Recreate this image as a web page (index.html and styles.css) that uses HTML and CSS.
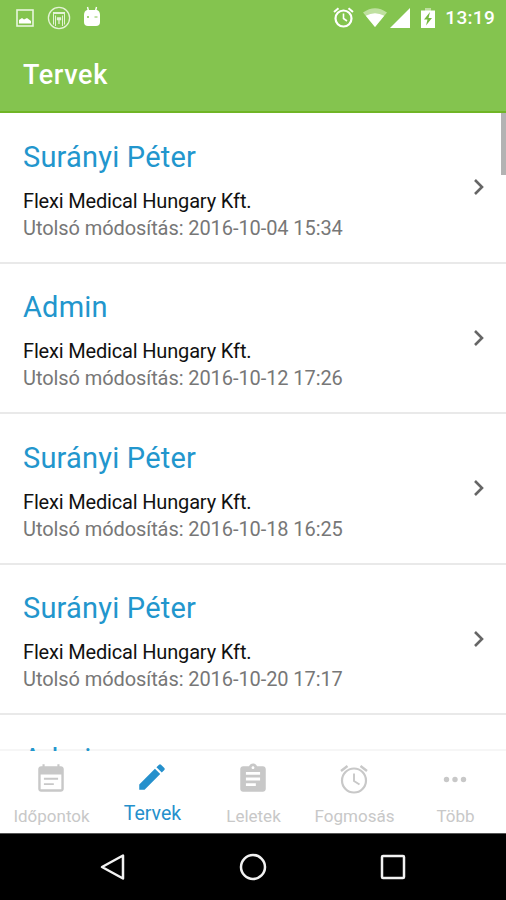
FILE: index.html
```html
<!DOCTYPE html>
<html lang="hu">
<head>
<meta charset="utf-8">
<title>Tervek</title>
<link rel="stylesheet" href="styles.css">
</head>
<body>
<div class="phone">
  <header class="header">
    <div class="status">
      <svg class="s-image" width="18" height="18" viewBox="0 0 18 18"><rect x="1" y="1" width="16" height="16" fill="none" stroke="#e8f5dc" stroke-width="1.6"/><path d="M3 14.500V11l3-2 2 1.500L11 9l4 3v2.500z" fill="#fff"/></svg>
      <svg class="s-badge" width="24" height="24" viewBox="0 0 24 24" fill="none" stroke="#e4f3d6"><circle cx="12" cy="12" r="10.600" stroke-width="1.300"/><path d="M6.500 18.500v-11h11v11M8.500 20V9.500M15.500 9.500V20" stroke-width="1"/><path d="M6 7h12" stroke-width="2"/><path d="M12 18v-4M10.500 12h3v1.500h-3z" stroke-width="1.300"/></svg>
      <svg class="s-android" width="18" height="21" viewBox="0 0 18 21"><path d="M4.500 1l1 4M13.500 1l-1 4" stroke="#fff" stroke-width="1.400"/><path d="M4 4h10q3 1 3 5v7q0 4-4 4H5q-4 0-4-4V9q0-4 3-5z" fill="#fff"/><circle cx="5" cy="11" r="1" fill="#84c44f"/><path d="M11.500 11h3" stroke="#84c44f" stroke-width="1"/></svg>
      <span class="spacer"></span>
      <svg class="s-alarm" width="21" height="21" viewBox="0 0 21 21" fill="none" stroke="#fff"><circle cx="10.500" cy="11.500" r="8" stroke-width="2.200"/><path d="M1 5l4.500-3.800M20 5l-4.500-3.800" stroke-width="2"/><path d="M10.500 6.500v5l3.500 2.500" stroke-width="1.600"/></svg>
      <svg class="s-wifi" width="24" height="20" viewBox="0 0 24 20"><path d="M0 4.500Q12-4 24 4.500L12 19z" fill="#bfe0a0"/><path d="M2.800 7.800Q12 2.500 21.200 7.800L12 19z" fill="#fff"/></svg>
      <svg class="s-signal" width="20" height="20" viewBox="0 0 20 20"><path d="M20 0v20H0z" fill="#fff"/></svg>
      <svg class="s-battery" width="14" height="20" viewBox="0 0 14 20"><path d="M4 0h6v3H4z" fill="#bfe0a0"/><path d="M0 2.500h14V20H0z" fill="#fff"/><path d="M9 4L3 11.500h3.500L5 17.500l6-7.500H7.500z" fill="#76b93e"/></svg>
      <span class="time">13:19</span>
    </div>
    <h1 class="title">Tervek</h1>
  </header>
  <main class="list">
    <div class="thumb"></div>
    <article class="row"><div class="info"><h2 class="name">Surányi Péter</h2><p class="org">Flexi Medical Hungary Kft.</p><p class="date">Utolsó módosítás: 2016-10-04 15:34</p></div><svg class="chevron" width="12" height="18" viewBox="0 0 12 18"><path d="M2 2l7 7-7 7"/></svg></article>
    <article class="row"><div class="info"><h2 class="name">Admin</h2><p class="org">Flexi Medical Hungary Kft.</p><p class="date">Utolsó módosítás: 2016-10-12 17:26</p></div><svg class="chevron" width="12" height="18" viewBox="0 0 12 18"><path d="M2 2l7 7-7 7"/></svg></article>
    <article class="row"><div class="info"><h2 class="name">Surányi Péter</h2><p class="org">Flexi Medical Hungary Kft.</p><p class="date">Utolsó módosítás: 2016-10-18 16:25</p></div><svg class="chevron" width="12" height="18" viewBox="0 0 12 18"><path d="M2 2l7 7-7 7"/></svg></article>
    <article class="row"><div class="info"><h2 class="name">Surányi Péter</h2><p class="org">Flexi Medical Hungary Kft.</p><p class="date">Utolsó módosítás: 2016-10-20 17:17</p></div><svg class="chevron" width="12" height="18" viewBox="0 0 12 18"><path d="M2 2l7 7-7 7"/></svg></article>
    <article class="row"><div class="info"><h2 class="name">Admin</h2></div></article>
  </main>
  <nav class="tabs">
    <div class="tab"><svg width="34" height="34" viewBox="0 0 24 24"><path fill="currentColor" d="M17 11.200H7v1.300h10zm2-8.200h-1V1.500h-1.500V3h-9V1.500H6V3H5c-1.100 0-2 .9-2 2v14c0 1.100.9 2 2 2h14c1.100 0 2-.9 2-2V5c0-1.100-.9-2-2-2zm.3 16.300H4.700V8.800h14.600zM14 15H7v1.300h7z"/></svg><span>Időpontok</span></div>
    <div class="tab active"><svg width="34" height="34" viewBox="0 0 24 24"><path fill="currentColor" d="M3 17.250V21h3.750L17.810 9.940l-3.750-3.750zM20.710 7.040a1 1 0 0 0 0-1.410l-2.340-2.340a1 1 0 0 0-1.410 0l-1.830 1.830 3.750 3.750z"/></svg><span>Tervek</span></div>
    <div class="tab"><svg width="34" height="34" viewBox="0 0 24 24"><path fill="currentColor" d="M19 3h-4.180C14.400 1.840 13.300 1 12 1s-2.400.84-2.820 2H5c-1.100 0-2 .9-2 2v14c0 1.100.9 2 2 2h14c1.100 0 2-.9 2-2V5c0-1.100-.9-2-2-2zm-7 0c.55 0 1 .45 1 1s-.45 1-1 1-1-.45-1-1 .45-1 1-1zm2 14H7v-2h7zm3-4H7v-2h10zm0-4H7V7h10z"/></svg><span>Leletek</span></div>
    <div class="tab"><svg width="34" height="34" viewBox="0 0 34 34" fill="none" stroke="currentColor"><circle cx="17" cy="18.500" r="12" stroke-width="2.200"/><path d="M4 9l6.500-5M30 9l-6.500-5" stroke-width="2.400"/><path d="M17 11.500V19l5.500 3.500" stroke-width="1.900"/></svg><span>Fogmosás</span></div>
    <div class="tab"><svg width="34" height="34" viewBox="0 0 34 34" fill="currentColor"><circle cx="8.500" cy="17.500" r="2.700"/><circle cx="17" cy="17.500" r="2.700"/><circle cx="25.500" cy="17.500" r="2.700"/></svg><span>Több</span></div>
  </nav>
  <footer class="system">
    <svg width="28" height="30" viewBox="0 0 28 30"><path d="M24 3.500v23L3 15z"/></svg>
    <svg width="28" height="30" viewBox="0 0 28 30"><circle cx="14" cy="15" r="12"/></svg>
    <svg width="28" height="30" viewBox="0 0 28 30"><rect x="3" y="4" width="22" height="22" rx="1"/></svg>
  </footer>
</div>
</body>
</html>
```
FILE: styles.css
```css
* { box-sizing: border-box; margin: 0; padding: 0; }
body { font-family: Roboto, "Liberation Sans", sans-serif; background: #fff; }
svg { display: block; flex: none; }
.phone { width: 506px; height: 900px; display: flex; flex-direction: column; overflow: hidden; }
.header { height: 113px; flex: none; background: #84c44f; border-bottom: 2px solid #70b526; color: #fff; }
.status { height: 36px; display: flex; align-items: center; padding: 0 11px 0 16px; }
.status svg { margin-top: -1px; }
.s-badge { margin-left: 13px; }
.status .s-android { margin-left: 12px; margin-top: -4px; }
.spacer { flex: 1; }
.s-wifi { margin-left: 9px; }
.s-signal { margin-left: 3px; }
.s-battery { margin-left: 11px; }
.time { margin-left: 10px; font-size: 19px; font-weight: 500; letter-spacing: .3px; line-height: 36px; }
.title { padding: 22px 0 0 23px; font-size: 27px; line-height: 34px; font-weight: 500; letter-spacing: .6px; }
/* Runs 2px over the tab bar's top edge so the last row is clipped just past it. */
.list { flex: 1; min-height: 0; margin-bottom: -2px; overflow: hidden; position: relative; z-index: 1; }
.thumb { position: absolute; right: 0; top: 0; width: 5px; height: 62px; background: #b3b3b3; }
.row { height: 150.500px; border-bottom: 2px solid #e9e9e9; display: flex; align-items: flex-start; justify-content: space-between; padding: 24.500px 21px 0 23px; }
.name { font-size: 29px; line-height: 38px; font-weight: 400; letter-spacing: .2px; color: #2296cd; }
.org { margin-top: 12px; font-size: 20px; line-height: 27px; letter-spacing: -.17px; color: #111; }
.date { font-size: 20px; line-height: 26px; letter-spacing: -.08px; color: #777; }
.chevron { margin-top: 40.500px; fill: none; stroke: #666; stroke-width: 2.600; }
.tabs { height: 84px; flex: none; border-top: 2px solid #f6f6f6; display: flex; padding-left: 1px; }
.tab { flex: 1; display: flex; flex-direction: column; align-items: center; padding-top: 11px; color: #c8c8c8; }
.tab svg { margin-left: -1px; }
.tab span { margin-top: 9px; font-size: 17px; line-height: 22px; }
.tab.active { color: #2590cc; padding-top: 9px; }
.tab.active span { font-size: 19.500px; }
.system { height: 67px; flex: none; background: #000; border-top: 1px solid #555; display: flex; justify-content: center; align-items: center; gap: 112px; }
.system svg { fill: none; stroke: #f2f2f2; stroke-width: 2.500; stroke-linejoin: round; }
```
